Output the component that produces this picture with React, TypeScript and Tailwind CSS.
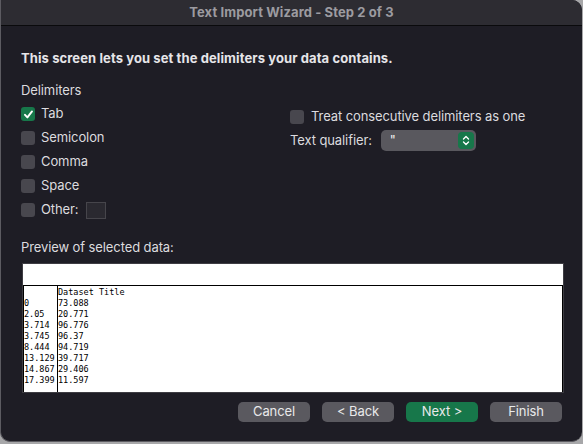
import React from "react";

const rows: [string, string][] = [
  ["", "Dataset Title"],
  ["0", "73.088"],
  ["2.05", "20.771"],
  ["3.714", "96.776"],
  ["3.745", "96.37"],
  ["8.444", "94.719"],
  ["13.129", "39.717"],
  ["14.867", "29.406"],
  ["17.399", "11.597"],
];

const delimiters = [
  { label: "Tab", checked: true },
  { label: "Semicolon", checked: false },
  { label: "Comma", checked: false },
  { label: "Space", checked: false },
];

function Checkbox({ checked }: { checked: boolean }) {
  if (checked) {
    return (
      <span className="flex h-[14px] w-[14px] shrink-0 items-center justify-center rounded-[3px] bg-[#17774a]">
        <svg width="11" height="11" viewBox="0 0 11 11" fill="none">
          <path d="M2 5.8 L4.4 8.4 L9 2.4" stroke="#ffffff" strokeWidth="1.9" strokeLinecap="round" strokeLinejoin="round" />
        </svg>
      </span>
    );
  }
  return <span className="h-[14px] w-[14px] shrink-0 rounded-[3px] bg-[#48474e]" />;
}

const buttonClass =
  "flex h-[20px] w-[72px] items-center justify-center rounded-[5px] text-[13px] text-[#e9e9ea]";

export default function App() {
  return (
    <div className="h-[444px] w-[583px] overflow-hidden bg-[#a7a7a9] font-['Inter','Liberation_Sans',sans-serif]">
      <div className="flex h-[442px] w-[582px] flex-col overflow-hidden rounded-tr-[10px] rounded-b-[10px] border-l border-b border-[#5c5b61] bg-[#1e1d25]">
        <div className="flex h-[26px] shrink-0 items-center justify-center border-b border-[#0a0a0c] bg-[#2d2c32] text-[13px] font-bold tracking-[0.1px] text-[#9c9ba0]">
          Text Import Wizard - Step 2 of 3
        </div>

        <div className="flex flex-col px-[20px] text-[13px] tracking-[-0.1px] text-[#dcdbdf]">
          <div className="mt-[24px] leading-[16px] font-bold tracking-[0.1px] text-[#e6e5e9]">
            This screen lets you set the delimiters your data contains.
          </div>

          <div className="mt-[16px] leading-[16px]">Delimiters</div>

          <div className="mt-[4px] flex">
            <div className="flex w-[269px] flex-col">
              {delimiters.map((d) => (
                <div key={d.label} className="flex h-[24px] items-center gap-[6px]">
                  <Checkbox checked={d.checked} />
                  <span>{d.label}</span>
                </div>
              ))}
              <div className="flex h-[24px] items-center gap-[6px]">
                <Checkbox checked={false} />
                <span>Other:</span>
                <span className="ml-[1px] h-[17px] w-[20px] border border-[#46454b] bg-[#2a2930]" />
              </div>
            </div>

            <div className="flex flex-col">
              <div className="mt-[5px] flex h-[20px] items-center gap-[7px]">
                <Checkbox checked={false} />
                <span>Treat consecutive delimiters as one</span>
              </div>
              <div className="mt-[3px] flex items-center gap-[9px]">
                <span>Text qualifier:</span>
                <div className="flex h-[21px] w-[95px] items-center justify-between rounded-[5px] bg-[#59585e] pl-[9px] pr-[2px]">
                  <span className="text-[#f0f0f0]">"</span>
                  <span className="flex h-[17px] w-[16px] items-center justify-center rounded-[4px] bg-[#17774a]">
                    <svg width="10" height="13" viewBox="0 0 10 13" fill="none">
                      <path d="M2.5 5 L5 2.5 L7.5 5" stroke="#ffffff" strokeWidth="1.4" strokeLinecap="round" strokeLinejoin="round" />
                      <path d="M2.5 8 L5 10.5 L7.5 8" stroke="#ffffff" strokeWidth="1.4" strokeLinecap="round" strokeLinejoin="round" />
                    </svg>
                  </span>
                </div>
              </div>
            </div>
          </div>

          <div className="mt-[17px] leading-[16px]">Preview of selected data:</div>

          <div className="mt-[8px] ml-[1px] flex h-[130px] w-[542px] flex-col border border-[#3e3d43] bg-white">
            <div className="h-[22px] shrink-0 border-b border-black" />
            <div className="flex flex-1 border-x border-black font-['DejaVu_Sans_Mono','Liberation_Mono',monospace] text-[8.5px] leading-[11px] tracking-normal text-black">
              <div className="flex w-[34px] flex-col border-r border-black pt-[1px]">
                {rows.map(([a], i) => (
                  <span key={i} className="h-[11px] whitespace-pre">{a}</span>
                ))}
              </div>
              <div className="flex flex-col pt-[1px]">
                {rows.map(([, b], i) => (
                  <span key={i} className="h-[11px] whitespace-pre">{b}</span>
                ))}
              </div>
            </div>
          </div>

          <div className="mt-[9px] flex justify-end gap-[12px]">
            <button className={`${buttonClass} bg-[#5a595f]`}>Cancel</button>
            <button className={`${buttonClass} bg-[#5a595f]`}>&lt; Back</button>
            <button className={`${buttonClass} bg-[#17774a]`}>Next &gt;</button>
            <button className={`${buttonClass} bg-[#5a595f]`}>Finish</button>
          </div>
        </div>
      </div>
    </div>
  );
}
